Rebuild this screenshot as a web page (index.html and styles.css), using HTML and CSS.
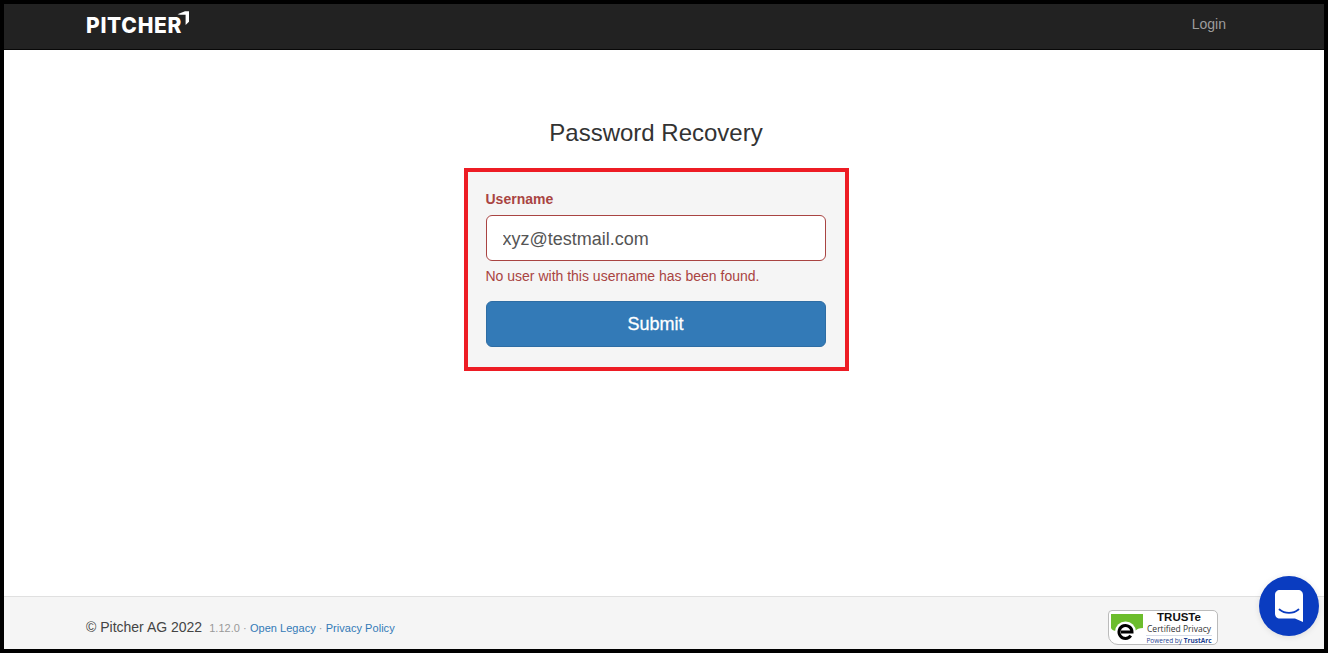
FILE: index.html
```html
<!DOCTYPE html>
<html lang="en">
<head>
  <meta charset="UTF-8">
  <title>Password Recovery</title>
  <link rel="stylesheet" href="styles.css">
</head>
<body>

  <div class="page">
    <nav class="navbar">
      <a class="brand" href="#">
        <span class="brand-name">PITCHER</span>
        <svg class="brand-arrow" width="12" height="14" viewBox="0 0 12 14">
          <path d="M0.5 3.2 L8 0.3 H12 V10.8 L8.6 14 V3.8 H3 Z" fill="#fff"/>
        </svg>
      </a>
      <a class="nav-link" href="#">Login</a>
    </nav>

    <main class="content">
      <h1 class="title">Password Recovery</h1>

      <div class="highlight">
        <form class="well">
          <label class="field-label" for="username">Username</label>
          <input class="field-input" id="username" type="text" value="xyz@testmail.com">
          <p class="field-error">No user with this username has been found.</p>
          <button class="btn-submit" type="button">Submit</button>
        </form>
      </div>
    </main>

    <footer class="footer">
      <div class="footer-left">
        <span class="copyright">© Pitcher AG 2022</span>
        <span class="version">1.12.0 · <a href="#">Open Legacy</a> · <a href="#">Privacy Policy</a></span>
      </div>
      <div class="truste">
        <svg class="truste-mark" width="38" height="33" viewBox="0 0 38 33">
          <path d="M3 2 H35 V16 C31 16 29 17 27 19 H9 C6 19 3.500 18 3 16 Z" fill="#6cbd2c"/>
          <circle cx="17.500" cy="20" r="10.500" fill="#fff"/>
          <path d="M22.800 23.700 A6.500 6.500 0 1 1 24 20 H13" fill="none" stroke="#000" stroke-width="3"/>
        </svg>
        <div class="truste-text">
          <span class="truste-name">TRUSTe</span>
          <span class="truste-cert">Certified Privacy</span>
          <span class="truste-power">Powered by <b>TrustArc</b></span>
        </div>
      </div>
    </footer>
  </div>

  <button class="chat" type="button" aria-label="Chat">
    <svg width="28" height="32" viewBox="0 0 28 32">
      <path d="M5 0 H23 C26 0 28 2 28 5 V32 L20 28.600 H5 C2 28.600 0 26.600 0 23.600 V5 C0 2 2 0 5 0 Z" fill="#fff"/>
      <path d="M4.500 19.500 C10 24 18 24 23.500 19.500" fill="none" stroke="#0a3cc0" stroke-width="1.800" stroke-linecap="round"/>
    </svg>
  </button>

</body>
</html>
```

FILE: styles.css
```css
* {
  box-sizing: border-box;
}

body {
  margin: 0;
  font-family: "Liberation Sans", Arial, sans-serif;
  color: #333;
  background-color: white;
}

a {
  color: #337ab7;
  text-decoration: none;
}

.page {
  display: flex;
  flex-direction: column;
  height: 653px;
  border: 4px solid black;
  overflow: hidden;
}

.navbar {
  display: flex;
  justify-content: space-between;
  align-items: center;
  flex-shrink: 0;
  height: 46px;
  padding: 0 98px 0 82px;
  background-color: #222;
  border-bottom: 1px solid #080808;
}

.brand {
  display: flex;
  align-items: flex-start;
  height: 32px;
}

.brand-name {
  margin-top: 4px;
  font-family: Inter, "Liberation Sans", sans-serif;
  font-size: 21px;
  font-weight: 800;
  line-height: 22px;
  letter-spacing: 0.7px;
  color: white;
}

.brand-arrow {
  margin: 0 0 0 -5px;
}

.nav-link {
  font-size: 14px;
  color: #9d9d9d;
  margin-top: -6px;
}

.content {
  flex: 1;
  display: flex;
  flex-direction: column;
  align-items: center;
  padding: 69px 16px 0 0;
}

.title {
  margin: 0 0 21px;
  font-size: 24px;
  font-weight: 400;
  line-height: 28px;
  color: #333;
}

.highlight {
  width: 385px;
  border: 4px solid #ed1c24;
}

.well {
  display: flex;
  flex-direction: column;
  padding: 17px 19px 20px 18px;
  background-color: #f5f5f5;
}

.field-label {
  margin-bottom: 6px;
  font-size: 14px;
  font-weight: 700;
  line-height: 20px;
  color: #a94442;
}

.field-input {
  width: 340px;
  height: 46px;
  padding: 12px 16px 10px;
  font-family: inherit;
  font-size: 18px;
  color: #555;
  background-color: white;
  border: 1px solid #a94442;
  border-radius: 6px;
}

.field-error {
  margin: 5px 0 15px;
  font-size: 14px;
  line-height: 20px;
  color: #a94442;
}

.btn-submit {
  width: 340px;
  height: 46px;
  font-family: inherit;
  font-size: 18px;
  color: white;
  -webkit-text-stroke: 0.3px white;
  background-color: #337ab7;
  border: 1px solid #2e6da4;
  border-radius: 6px;
  cursor: pointer;
}

.footer {
  display: flex;
  justify-content: space-between;
  align-items: flex-start;
  flex-shrink: 0;
  height: 53px;
  padding: 13px 106px 0 82px;
  background-color: #f5f5f5;
  border-top: 1px solid #e0e0e0;
}

.footer-left {
  display: flex;
  align-items: baseline;
  gap: 7px;
  margin-top: 9px;
}

.copyright {
  font-size: 14px;
  color: #444;
}

.version {
  font-size: 11px;
  letter-spacing: 0.04px;
  color: #999;
}

.truste {
  display: flex;
  width: 110px;
  height: 35px;
  background-color: white;
  border: 1px solid #bbb;
  border-radius: 4px 5px 5px 10px;
}

.truste-mark {
  flex-shrink: 0;
  margin: 1px 0 0 -1px;
}

.truste-text {
  display: flex;
  flex-direction: column;
  align-items: center;
  width: 66px;
  margin-left: 0;
}

.truste-name {
  font-size: 11.5px;
  font-weight: 700;
  line-height: 12px;
  color: #111;
}

.truste-cert {
  font-family: "Open Sans", sans-serif;
  font-size: 8.500px;
  line-height: 11px;
  color: #333;
}

.truste-power {
  margin-top: 1px;
  font-family: "Open Sans", sans-serif;
  font-size: 6.500px;
  line-height: 9px;
  color: #1d3f8f;
  border-top: 1px solid #d6dce8;
}

.chat {
  position: fixed;
  left: 1259px;
  top: 576px;
  display: flex;
  justify-content: center;
  align-items: center;
  width: 60px;
  height: 60px;
  padding: 0;
  background-color: #0a3cc0;
  border: none;
  border-radius: 50%;
  box-shadow: 0 1px 6px rgba(0,0,0,0.1);
  cursor: pointer;
}
```
